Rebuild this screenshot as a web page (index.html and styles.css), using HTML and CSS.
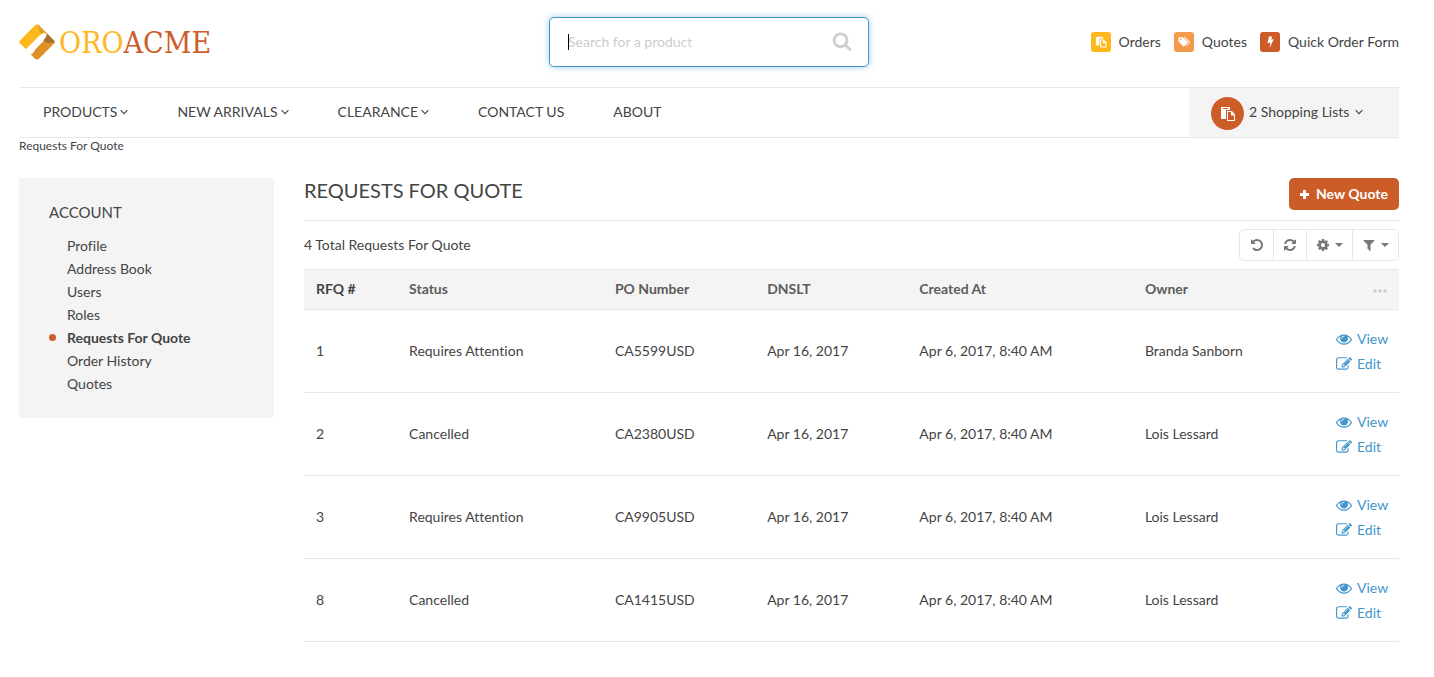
FILE: index.html
```html
<!DOCTYPE html>
<html lang="en">
<head>
<meta charset="utf-8">
<title>Requests For Quote</title>
<meta name="viewport" content="width=device-width, initial-scale=1">
<link rel="stylesheet" href="styles.css">
</head>
<body>
<svg class="sprite" aria-hidden="true">
  <symbol id="chevron" viewBox="0 0 8 6"><path d="M.6 1.2 4 4.600 7.400 1.200" fill="none" stroke="currentColor" stroke-width="1.1"/></symbol>
  <symbol id="caret" viewBox="0 0 8 4"><path d="M0 0h8L4 4z"/></symbol>
  <symbol id="paste" viewBox="0 0 14 14"><path fill-rule="evenodd" d="M0 0h9V3H5V12H0zM2 1v1h5V1z"/><path fill-rule="evenodd" d="M6 4h5l3 3.500V14H6zM7 5v8h6V8.500h-3V5z"/></symbol>
  <symbol id="orders" viewBox="0 0 14 14"><path d="M1 2Q1 1 2 1h6.500q1 0 1 1v1H6.500Q5 3 5 4.500V11H2q-1 0-1-1z"/><path fill-rule="evenodd" d="M6.800 4H10l3.500 3.500v5q0 .8-.8.800H6.800q-.8 0-.8-.8V4.800Q6 4 6.800 4zM7.300 5.200v7h5V8.500H9.300V5.200z"/></symbol>
  <symbol id="tags" viewBox="0 0 14 12"><path fill-rule="evenodd" d="M.5 1.500q0-1 1-1H5q.8 0 1.500.7l4.300 4.300q.8.800 0 1.600L7.500 10.600q-.8.700-1.600 0L1.200 6Q.5 5.200.5 4.500zM2 3a1 1 0 1 0 2 0 1 1 0 1 0-2 0z"/><path d="M6.800.5h1q.8 0 1.500.7l4.200 4.300q.8.800 0 1.600l-3.300 3.400q-.8.700-1.500.2l3.300-3.400q.7-.8 0-1.500z"/></symbol>
  <symbol id="search" viewBox="0 0 1792 1792"><path d="M1216 832q0-185-131.500-316.500t-316.500-131.500-316.500 131.500-131.500 316.500 131.500 316.500 316.500 131.500 316.500-131.500 131.500-316.500zm512 832q0 52-38 90t-90 38q-54 0-90-38l-343-342q-179 124-399 124-143 0-273.500-55.500t-225-150-150-225-55.500-273.500 55.500-273.500 150-225 225-150 273.500-55.500 273.500 55.500 225 150 150 225 55.500 273.500q0 220-124 399l343 343q37 37 37 90z"/></symbol>
  <symbol id="eye" viewBox="0 0 1792 1792"><path d="M1664 960q-152-236-381-353 61 104 61 225 0 185-131.500 316.500t-316.500 131.500-316.500-131.500-131.500-316.500q0-121 61-225-229 117-381 353 133 205 333.500 326.500t434.500 121.500 434.500-121.500 333.500-326.500zm-720-384q0-20-14-34t-34-14q-125 0-214.500 89.500t-89.500 214.500q0 20 14 34t34 14 34-14 14-34q0-86 61-147t147-61q20 0 34-14t14-34zm848 384q0 34-20 69-140 230-376.500 368.500t-499.500 138.500-499.500-139-376.500-368q-20-35-20-69t20-69q140-229 376.500-368t499.500-139 499.500 139 376.500 368q20 35 20 69z"/></symbol>
  <symbol id="edit" viewBox="0 0 1792 1792"><path d="M888 1184l116-116-152-152-116 116v56h96v96h56zm440-720q-16-16-33 1l-350 350q-17 17-1 33t33-1l350-350q17-17 1-33zm80 594v190q0 119-84.500 203.500t-203.500 84.500h-832q-119 0-203.500-84.500t-84.500-203.500v-832q0-119 84.500-203.500t203.500-84.500h832q63 0 117 25 15 7 18 23 3 17-9 29l-49 49q-14 14-32 8-23-6-45-6h-832q-66 0-113 47t-47 113v832q0 66 47 113t113 47h832q66 0 113-47t47-113v-126q0-13 9-22l64-64q15-15 35-7t20 29zm-96-738l288 288-672 672h-288v-288zm444 132l-92 92-288-288 92-92q28-28 68-28t68 28l152 152q28 28 28 68t-28 68z"/></symbol>
  <symbol id="undo" viewBox="0 0 1792 1792"><path d="M1664 896q0 156-61 298t-164 245-245 164-298 61q-172 0-327-72.500t-264-204.500q-7-10-6.500-22.500t8.500-20.500l137-138q10-9 25-9 16 2 23 12 73 95 179 147t225 52q104 0 198.500-40.500t163.500-109.500 109.500-163.500 40.500-198.500-40.500-198.500-109.500-163.500-163.500-109.500-198.500-40.500q-98 0-188 35.500t-160 101.500l137 138q31 30 14 69-17 40-59 40h-448q-26 0-45-19t-19-45v-448q0-42 40-59 39-17 69 14l130 129q107-101 244.500-156.500t284.500-55.500q156 0 298 61t245 164 164 245 61 298z"/></symbol>
  <symbol id="refresh" viewBox="0 0 1792 1792"><path d="M1639 1056q0 5-1 7-64 268-268 434.500t-478 166.500q-146 0-282.500-55t-243.500-157l-129 129q-19 19-45 19t-45-19-19-45v-448q0-26 19-45t45-19h448q26 0 45 19t19 45-19 45l-137 137q71 66 161 102t187 36q134 0 250-65t186-179q11-17 53-117 8-23 30-23h192q13 0 22.500 9.500t9.500 22.500zm25-800v448q0 26-19 45t-45 19h-448q-26 0-45-19t-19-45 19-45l138-138q-148-137-349-137-134 0-250 65t-186 179q-11 17-53 117-8 23-30 23h-199q-13 0-22.500-9.500t-9.500-22.500v-7q65-268 270-434.500t480-166.500q146 0 284 55.500t245 156.500l130-129q19-19 45-19t45 19 19 45z"/></symbol>
  <symbol id="cog" viewBox="0 0 1792 1792"><path d="M1152 896q0-106-75-181t-181-75-181 75-75 181 75 181 181 75 181-75 75-181zm512-109v222q0 12-8 23t-20 13l-185 28q-19 54-39 91 35 50 107 138 10 12 10 25t-9 23q-27 37-99 108t-94 71q-12 0-26-9l-138-108q-44 23-91 38-16 136-29 186-7 28-36 28h-222q-14 0-24.500-8.500t-11.500-21.500l-28-184q-49-16-90-37l-141 107q-10 9-25 9-14 0-25-11-126-114-165-168-7-10-7-23 0-12 8-23 15-21 51-66.500t54-70.500q-27-50-41-99l-183-27q-13-2-21-12.500t-8-23.500v-222q0-12 8-23t19-13l186-28q14-46 39-92-40-57-107-138-10-12-10-24 0-10 9-23 26-36 98.500-107.500t94.500-71.500q13 0 26 10l138 107q44-23 91-38 16-136 29-186 7-28 36-28h222q14 0 24.500 8.500t11.500 21.500l28 184q49 16 90 37l142-107q9-9 24-9 13 0 25 10 129 119 165 170 7 8 7 22 0 12-8 23-15 21-51 66.500t-54 70.500q26 50 41 98l183 28q13 2 21 12.500t8 23.500z"/></symbol>
  <symbol id="filter" viewBox="0 0 1792 1792"><path d="M1595 295q17 41-14 70l-493 493v742q0 42-39 59-13 5-25 5-27 0-45-19l-256-256q-19-19-19-45v-486l-493-493q-31-29-14-70 17-39 59-39h1280q42 0 59 39z"/></symbol>
</svg>

<header class="header">
  <a class="logo" href="#">
    <svg class="logo-mark" viewBox="0 0 36 36" aria-hidden="true">
      <path d="M1 16.500 16 1.200q2-1.600 4 0L26 8 8 26 1 19.500q-1.500-1.500 0-3z" fill="#fdb81e"/>
      <path d="M19 .6l1 .6 10 10-3 5L20 7z" fill="#e3a32b"/>
      <path d="M28.500 9.700 35 16.500q1.500 1.500 0 3L30 22l-6-6z" fill="#a8702c"/>
      <path d="M11.500 30 25 16.500q1 2 4 2.500l6.800-1q0 .8-.8 1.500L20 34.800q-2 1.500-4 0z" fill="#de8f26"/>
      <path d="M7 25 19.500 12.500Q24.500 7.500 27 9.500q1.500 2.500-2.500 6.500L16.500 25Q14 30.500 11.800 30z" fill="#fff"/>
    </svg>
    <span class="logo-text"><span class="logo-oro">ORO</span><span class="logo-acme">ACME</span></span>
  </a>
  <form class="search" role="search">
    <input class="search-input" type="search" placeholder="Search for a product" aria-label="Search for a product">
    <span class="search-cursor"></span>
    <button class="search-button" type="button" aria-label="Search"><svg class="icon-search"><use href="#search"/></svg></button>
  </form>
  <nav class="quick-links" aria-label="Quick access">
    <a class="quick-link" href="#"><span class="badge badge-yellow"><svg class="icon-badge"><use href="#orders"/></svg></span>Orders</a>
    <a class="quick-link" href="#"><span class="badge badge-orange"><svg class="icon-badge"><use href="#tags"/></svg></span>Quotes</a>
    <a class="quick-link" href="#"><span class="badge badge-red"><svg class="icon-badge" viewBox="0 0 12 12"><path d="M5 .5h3.200L7.300 3.700l2.500-.5L5.500 12l.9-5.500-3 .7z"/></svg></span>Quick Order Form</a>
  </nav>
</header>

<div class="menu-bar">
  <nav class="menu" aria-label="Main menu">
    <a class="menu-item" href="#">PRODUCTS<svg class="icon-chevron"><use href="#chevron"/></svg></a>
    <a class="menu-item" href="#">NEW ARRIVALS<svg class="icon-chevron"><use href="#chevron"/></svg></a>
    <a class="menu-item" href="#">CLEARANCE<svg class="icon-chevron"><use href="#chevron"/></svg></a>
    <a class="menu-item" href="#">CONTACT US</a>
    <a class="menu-item" href="#">ABOUT</a>
  </nav>
  <button class="shopping" type="button"><span class="shopping-icon"><svg class="icon-paste"><use href="#paste"/></svg></span><span class="shopping-label">2 Shopping Lists<svg class="icon-chevron"><use href="#chevron"/></svg></span></button>
</div>

<div class="breadcrumb">Requests For Quote</div>

<div class="page">
  <aside class="sidebar">
    <h2 class="sidebar-title">ACCOUNT</h2>
    <ul class="sidebar-list">
      <li><a class="sidebar-link" href="#">Profile</a></li>
      <li><a class="sidebar-link" href="#">Address Book</a></li>
      <li><a class="sidebar-link" href="#">Users</a></li>
      <li><a class="sidebar-link" href="#">Roles</a></li>
      <li><a class="sidebar-link active" href="#" aria-current="page">Requests For Quote</a></li>
      <li><a class="sidebar-link" href="#">Order History</a></li>
      <li><a class="sidebar-link" href="#">Quotes</a></li>
    </ul>
  </aside>

  <main class="content">
    <div class="title-row">
      <h1 class="title">REQUESTS FOR QUOTE</h1>
      <button class="new-quote" type="button"><svg class="icon-plus" viewBox="0 0 9 9"><path d="M3 0h3v3h3v3H6v3H3V6H0V3h3z"/></svg>New Quote</button>
    </div>
    <div class="toolbar">
      <span>4 Total Requests For Quote</span>
      <div class="tools">
        <button class="tool" type="button" aria-label="Reset"><svg class="icon"><use href="#undo"/></svg></button>
        <button class="tool" type="button" aria-label="Refresh"><svg class="icon"><use href="#refresh"/></svg></button>
        <button class="tool tool-wide" type="button" aria-label="Grid settings"><svg class="icon"><use href="#cog"/></svg><svg class="icon-caret"><use href="#caret"/></svg></button>
        <button class="tool tool-wide" type="button" aria-label="Filters"><svg class="icon"><use href="#filter"/></svg><svg class="icon-caret"><use href="#caret"/></svg></button>
      </div>
    </div>
    <table class="grid">
      <colgroup><col class="col-id"><col class="col-status"><col class="col-po"><col class="col-date"><col class="col-created"><col><col class="col-actions"></colgroup>
      <thead>
        <tr><th class="sorted">RFQ #</th><th>Status</th><th>PO Number</th><th>DNSLT</th><th>Created At</th><th>Owner</th><th class="more"><svg class="icon-dots" viewBox="0 0 14 4" role="img" aria-label="Actions"><circle cx="2" cy="2" r="1.700"/><circle cx="7" cy="2" r="1.700"/><circle cx="12" cy="2" r="1.700"/></svg></th></tr>
      </thead>
      <tbody>
        <tr><td>1</td><td>Requires Attention</td><td>CA5599USD</td><td>Apr 16, 2017</td><td>Apr 6, 2017, 8:40 AM</td><td>Branda Sanborn</td>
          <td class="actions"><a class="action" href="#"><svg class="icon-action"><use href="#eye"/></svg>View</a><a class="action" href="#"><svg class="icon-action"><use href="#edit"/></svg>Edit</a></td></tr>
        <tr><td>2</td><td>Cancelled</td><td>CA2380USD</td><td>Apr 16, 2017</td><td>Apr 6, 2017, 8:40 AM</td><td>Lois Lessard</td>
          <td class="actions"><a class="action" href="#"><svg class="icon-action"><use href="#eye"/></svg>View</a><a class="action" href="#"><svg class="icon-action"><use href="#edit"/></svg>Edit</a></td></tr>
        <tr><td>3</td><td>Requires Attention</td><td>CA9905USD</td><td>Apr 16, 2017</td><td>Apr 6, 2017, 8:40 AM</td><td>Lois Lessard</td>
          <td class="actions"><a class="action" href="#"><svg class="icon-action"><use href="#eye"/></svg>View</a><a class="action" href="#"><svg class="icon-action"><use href="#edit"/></svg>Edit</a></td></tr>
        <tr><td>8</td><td>Cancelled</td><td>CA1415USD</td><td>Apr 16, 2017</td><td>Apr 6, 2017, 8:40 AM</td><td>Lois Lessard</td>
          <td class="actions"><a class="action" href="#"><svg class="icon-action"><use href="#eye"/></svg>View</a><a class="action" href="#"><svg class="icon-action"><use href="#edit"/></svg>Edit</a></td></tr>
      </tbody>
    </table>
  </main>
</div>
</body>
</html>
```
FILE: styles.css
```css
* { box-sizing: border-box; }
body {
  margin: 0;
  padding: 0 35px 24px 19px;
  background: #fff;
  color: #444;
  font: 14px/20px Lato, sans-serif;
  font-variant-ligatures: none;
}
a { color: inherit; text-decoration: none; }
button { font: inherit; color: inherit; border: 0; background: none; padding: 0; cursor: pointer; }
svg { display: block; flex: none; fill: currentColor; }
.sprite { position: absolute; width: 0; height: 0; }

.header {
  display: grid;
  grid-template-columns: 1fr 320px 1fr;
  align-items: center;
  padding: 17px 0 20px;
}
.logo { display: flex; align-items: center; gap: 4px; }
.logo-mark { width: 36px; height: 36px; }
.logo-text { padding-top: 2px; font: 30px/36px "DejaVu Serif Condensed", "DejaVu Serif", serif; }
.logo-oro { color: #fdb81e; }
.logo-acme { color: #cc5c28; }

.search { position: relative; display: flex; }
.search-input {
  width: 100%;
  height: 50px;
  padding: 0 56px 2px 18px;
  border: 1px solid #4396cb;
  border-radius: 5px;
  box-shadow: 0 0 6px rgba(67, 150, 203, .5);
  background: #fff;
  color: #444;
  font: inherit;
  outline: 0;
}
.search-input::placeholder { color: #cdcdcd; opacity: 1; }
.search-cursor { position: absolute; left: 19px; top: 17px; width: 1px; height: 16px; background: #000; }
.search-button { position: absolute; right: 17px; top: 14px; color: #cfcfcf; }
.icon-search { width: 20px; height: 20px; }

.quick-links { display: flex; justify-content: flex-end; gap: 13px; }
.quick-link { display: flex; align-items: center; gap: 8px; }
.badge { display: flex; align-items: center; justify-content: center; width: 20px; height: 20px; border-radius: 3px; color: #fff; }
.badge-yellow { background: #fdb81e; }
.badge-orange { background: #f39a4d; }
.badge-red { background: #cc5c28; }
.icon-badge { width: 12px; height: 12px; }

.menu-bar {
  display: flex;
  justify-content: space-between;
  border-top: 1px solid #e8e8e8;
  border-bottom: 1px solid #e8e8e8;
}
.menu { display: flex; align-items: center; gap: 49px; padding: 0 0 2px 24px; }
.menu-item { display: flex; align-items: center; gap: 3px; }
.icon-chevron { width: 8px; height: 6px; }
.shopping { display: flex; align-items: center; width: 210px; height: 49px; padding: 2px 0 0 22px; background: #f4f4f4; }
.shopping-icon { display: flex; align-items: center; justify-content: center; width: 33px; height: 33px; border-radius: 50%; background: #cc5c28; color: #fff; }
.icon-paste { width: 14px; height: 14px; }
.shopping-label { display: flex; align-items: center; gap: 6px; padding: 0 0 3px 5px; }

.breadcrumb { font-size: 12px; line-height: 16px; }

.page { display: flex; gap: 30px; align-items: flex-start; margin-top: 24px; }
.sidebar { flex: 0 0 255px; padding: 24px 30px 23px; border-radius: 3px; background: #f4f4f4; }
.sidebar-title { margin: 0 0 12px; font-size: 15px; font-weight: 400; line-height: 20px; }
.sidebar-list { margin: 0; padding: 0; list-style: none; }
.sidebar-link { position: relative; display: block; padding-left: 18px; line-height: 23px; }
.active { font-weight: 700; }
.active::before { content: ""; position: absolute; left: 0; top: 8px; width: 7px; height: 7px; border-radius: 50%; background: #cc5c28; }

.content { flex: 1; min-width: 0; }
.title-row { display: flex; justify-content: space-between; align-items: flex-start; padding-bottom: 10px; border-bottom: 1px solid #e8e8e8; }
.title { margin: 0; font-size: 20px; font-weight: 400; line-height: 24px; }
.new-quote { display: flex; align-items: center; gap: 7px; height: 32px; padding: 0 11px; border-radius: 5px; background: #cc5c28; color: #fff; font-weight: 700; }
.icon-plus { width: 9px; height: 9px; }
.toolbar { display: flex; align-items: center; justify-content: space-between; padding: 8px 0; }
.tools { display: flex; border: 1px solid #e8e8e8; border-radius: 5px; }
.tool { display: flex; align-items: center; justify-content: center; gap: 5px; width: 33px; height: 30px; color: #777; }
.tool + .tool { border-left: 1px solid #e8e8e8; }
.tool-wide { width: 46px; }
.icon { width: 14px; height: 14px; }
.icon-caret { width: 8px; height: 4px; }

.grid { width: 100%; border-collapse: collapse; table-layout: fixed; }
.col-id { width: 8.5%; }
.col-status { width: 18.8%; }
.col-po, .col-date { width: 13.9%; }
.col-created { width: 20.6%; }
.col-actions { width: 75px; }
th { height: 40px; padding: 0 12px 2px; border-top: 1px solid #e8e8e8; background: #f4f4f4; color: #5c5c5c; text-align: left; }
.sorted { color: #444; }
.more { color: #ccc; }
.icon-dots { width: 14px; height: 4px; margin: 4px 0 0 auto; }
td { height: 83px; padding: 0 12px; }
tr { border-bottom: 1px solid #e8e8e8; }
.actions { padding-right: 0; color: #4396cb; }
.action { display: flex; align-items: center; gap: 5px; line-height: 25px; }
.icon-action { width: 16px; height: 16px; }
```
